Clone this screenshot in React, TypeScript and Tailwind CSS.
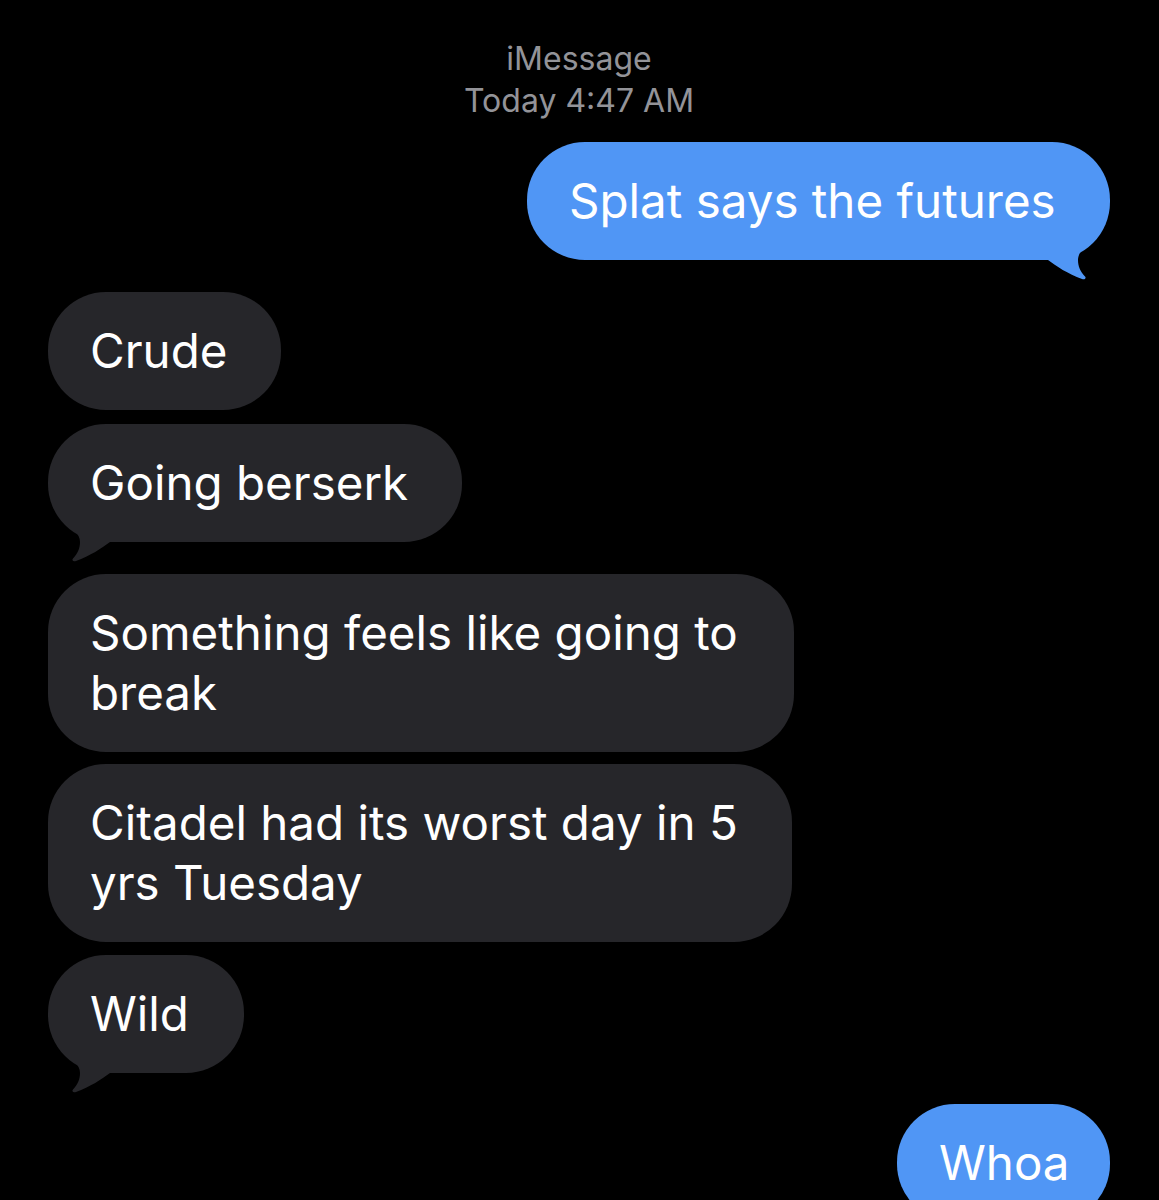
import React from "react";

type Msg = {
  lines: string[];
  me: boolean;
  tail: boolean;
  w: string;
  mt: string;
};

const msgs: Msg[] = [
  { lines: ["Splat says the futures"], me: true, tail: true, w: "w-[583px]", mt: "mt-[20px]" },
  { lines: ["Crude"], me: false, tail: false, w: "w-[233px]", mt: "mt-[32px]" },
  { lines: ["Going berserk"], me: false, tail: true, w: "w-[414px]", mt: "mt-[14px]" },
  { lines: ["Something feels like going to", "break"], me: false, tail: false, w: "w-[746px]", mt: "mt-[32px]" },
  { lines: ["Citadel had its worst day in 5", "yrs Tuesday"], me: false, tail: false, w: "w-[744px]", mt: "mt-[12px]" },
  { lines: ["Wild"], me: false, tail: true, w: "w-[196px]", mt: "mt-[13px]" },
  { lines: ["Whoa"], me: true, tail: true, w: "w-[213px]", mt: "mt-[31px]" },
];

function Tail({ me }: { me: boolean }) {
  const color = me ? "#5096f5" : "#26262a";
  return (
    <svg
      width="70"
      height="50"
      viewBox="0 0 70 50"
      className={
        me
          ? "absolute right-0 bottom-[-20px] -scale-x-100"
          : "absolute left-0 bottom-[-20px]"
      }
    >
      <path
        d="M12 0 H70 V30 H62 C54 36 42 44 28 49 C25 50 23.5 48 25 46.5 C30 41 32 36 32 30 C32 26 30 22 27 19 Z"
        fill={color}
      />
    </svg>
  );
}

function Bubble({ m }: { m: Msg }) {
  return (
    <div
      className={`${m.me ? "self-end bg-[#5096f5]" : "self-start bg-[#26262a]"} ${m.w} ${m.mt} relative shrink-0 rounded-[58px] py-[29px] pl-[42px] pr-[20px] text-[47.5px] leading-[60px] text-white whitespace-nowrap`}
    >
      {m.tail && <Tail me={m.me} />}
      <div className="relative">
        {m.lines.map((l, i) => (
          <div key={i}>{l}</div>
        ))}
      </div>
    </div>
  );
}

export default function App() {
  return (
    <div
      className="w-[1159px] h-[1200px] bg-black overflow-hidden flex flex-col pl-[48px] pr-[49px] pt-[38px]"
      style={{ fontFamily: "Inter, 'Liberation Sans', sans-serif" }}
    >
      <div className="flex flex-col items-center text-[32px] leading-[42px] text-[#939398]">
        <div>iMessage</div>
        <div>Today 4:47 AM</div>
      </div>
      {msgs.map((m, i) => (
        <Bubble key={i} m={m} />
      ))}
    </div>
  );
}
